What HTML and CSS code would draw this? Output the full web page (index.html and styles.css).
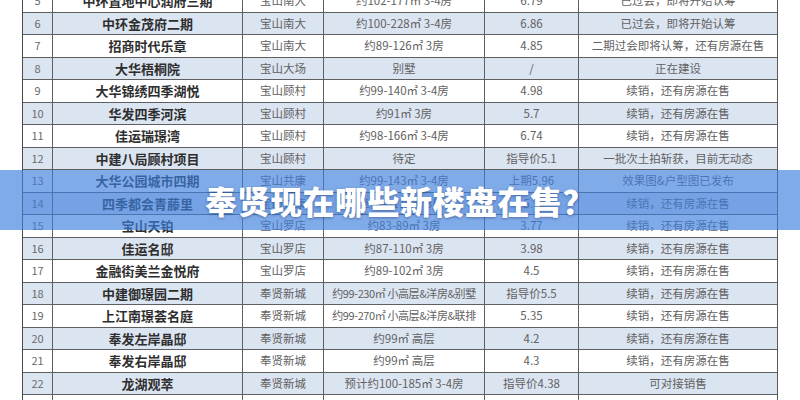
FILE: index.html
```html
<!DOCTYPE html>
<html lang="zh-CN">
<head>
<meta charset="utf-8">
<title>奉贤现在哪些新楼盘在售？</title>
<link rel="stylesheet" href="styles.css">
</head>
<body>
<div class="page">
  <div class="sheet">
    <div class="row"><div class="c no">5</div><div class="c name">中环置地中心润府三期</div><div class="c">宝山南大</div><div class="c">约102-177㎡ 3-4房</div><div class="c">6.79</div><div class="c">已过会，即将开始认筹</div></div>
    <div class="row alt"><div class="c no">6</div><div class="c name">中环金茂府二期</div><div class="c">宝山南大</div><div class="c">约100-228㎡ 3-4房</div><div class="c">6.86</div><div class="c">已过会，即将开始认筹</div></div>
    <div class="row"><div class="c no">7</div><div class="c name">招商时代乐章</div><div class="c">宝山南大</div><div class="c">约89-126㎡ 3房</div><div class="c">4.85</div><div class="c">二期过会即将认筹，还有房源在售</div></div>
    <div class="row alt"><div class="c no">8</div><div class="c name">大华梧桐院</div><div class="c">宝山大场</div><div class="c">别墅</div><div class="c">/</div><div class="c">正在建设</div></div>
    <div class="row"><div class="c no">9</div><div class="c name">大华锦绣四季湖悦</div><div class="c">宝山顾村</div><div class="c">约99-140㎡ 3-4房</div><div class="c">4.98</div><div class="c">续销，还有房源在售</div></div>
    <div class="row alt"><div class="c no">10</div><div class="c name">华发四季河滨</div><div class="c">宝山顾村</div><div class="c">约91㎡ 3房</div><div class="c">5.7</div><div class="c">续销，还有房源在售</div></div>
    <div class="row"><div class="c no">11</div><div class="c name">佳运瑞璟湾</div><div class="c">宝山顾村</div><div class="c">约98-166㎡ 3-4房</div><div class="c">6.74</div><div class="c">续销，还有房源在售</div></div>
    <div class="row alt"><div class="c no">12</div><div class="c name">中建八局顾村项目</div><div class="c">宝山顾村</div><div class="c">待定</div><div class="c">指导价5.1</div><div class="c">一批次土拍斩获，目前无动态</div></div>
    <div class="row"><div class="c no">13</div><div class="c name">大华公园城市四期</div><div class="c">宝山共康</div><div class="c">约99-143㎡ 3-4房</div><div class="c">上期5.96</div><div class="c">效果图&amp;户型图已发布</div></div>
    <div class="row alt"><div class="c no">14</div><div class="c name">四季都会青藤里</div><div class="c">宝山共康</div><div class="c">约89-116㎡ 3房</div><div class="c">5.7</div><div class="c">续销，还有房源在售</div></div>
    <div class="row"><div class="c no">15</div><div class="c name">宝山天铂</div><div class="c">宝山罗店</div><div class="c">约83-89㎡ 3房</div><div class="c">3.77</div><div class="c">续销，还有房源在售</div></div>
    <div class="row alt"><div class="c no">16</div><div class="c name">佳运名邸</div><div class="c">宝山罗店</div><div class="c">约87-110㎡ 3房</div><div class="c">3.98</div><div class="c">续销，还有房源在售</div></div>
    <div class="row"><div class="c no">17</div><div class="c name">金融街美兰金悦府</div><div class="c">宝山罗店</div><div class="c">约89-102㎡ 3房</div><div class="c">4.5</div><div class="c">续销，还有房源在售</div></div>
    <div class="row alt"><div class="c no">18</div><div class="c name">中建御璟园二期</div><div class="c">奉贤新城</div><div class="c tight">约99-230㎡ 小高层&amp;洋房&amp;别墅</div><div class="c">指导价5.5</div><div class="c">续销，还有房源在售</div></div>
    <div class="row"><div class="c no">19</div><div class="c name">上江南璟荟名庭</div><div class="c">奉贤新城</div><div class="c tight">约99-270㎡ 小高层&amp;洋房&amp;联排</div><div class="c">5.35</div><div class="c">续销，还有房源在售</div></div>
    <div class="row alt"><div class="c no">20</div><div class="c name">奉发左岸晶邸</div><div class="c">奉贤新城</div><div class="c">约99㎡ 高层</div><div class="c">4.2</div><div class="c">续销，还有房源在售</div></div>
    <div class="row"><div class="c no">21</div><div class="c name">奉发右岸晶邸</div><div class="c">奉贤新城</div><div class="c">约99㎡ 高层</div><div class="c">4.3</div><div class="c">续销，还有房源在售</div></div>
    <div class="row alt"><div class="c no">22</div><div class="c name">龙湖观萃</div><div class="c">奉贤新城</div><div class="c">预计约100-185㎡ 3-4房</div><div class="c">指导价4.38</div><div class="c">可对接销售</div></div>
    <div class="row"><div class="c no"></div><div class="c name"></div><div class="c"></div><div class="c"></div><div class="c"></div><div class="c"></div></div>
  </div>
  <div class="banner"><span class="title">奉贤现在哪些新楼盘在售？</span></div>
</div>
</body>
</html>
```
FILE: styles.css
```css
html, body {
  margin: 0;
  padding: 0;
  background: #ffffff;
}

.page {
  position: relative;
  width: 800px;
  height: 400px;
  overflow: hidden;
  background: #ffffff;
  font-family: "Noto Sans CJK SC", "Noto Sans", sans-serif;
}

.sheet {
  margin: -10px 0 0 22px;
  width: 756px;
  box-sizing: border-box;
  border-left: 1.5px solid #4a4a4a;
  border-right: 1px solid #5a5a5a;
}

.row {
  display: grid;
  grid-template-columns: 30px 190px 81px 161px 94px 1fr;
  height: 22.5px;
  box-sizing: border-box;
  border-bottom: 1px solid #5f5f5f;
  background: #ffffff;
}

.row.alt {
  background: #dbe4f1;
}

.c {
  display: flex;
  align-items: center;
  justify-content: center;
  border-right: 1px solid #5f5f5f;
  font-size: 11.5px;
  color: #626262;
  white-space: pre;
  overflow: hidden;
  line-height: 1;
}

.c:last-child {
  border-right: none;
}

.c.no {
  font-size: 11px;
  color: #6a6a6a;
}

.c.name {
  font-size: 13px;
  font-weight: 700;
  color: #2e2e2e;
}

.c.tight {
  font-size: 11px;
  letter-spacing: -0.4px;
}

.banner {
  position: absolute;
  left: 0;
  top: 170px;
  width: 800px;
  height: 60px;
  background: rgba(62, 128, 222, 0.66);
  display: flex;
  align-items: center;
  justify-content: center;
}

.title {
  font-size: 32px;
  font-weight: 900;
  color: #ffffff;
  letter-spacing: 0.5px;
  text-shadow: 0 1px 3px rgba(20, 40, 90, 0.45);
  line-height: 1;
}
```
